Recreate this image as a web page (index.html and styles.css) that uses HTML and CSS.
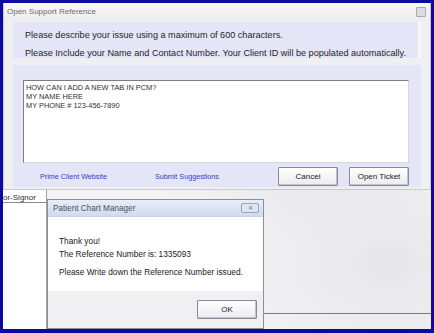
FILE: index.html
```html
<!DOCTYPE html>
<html lang="en">
  <head>
    <meta charset="UTF-8" />
    <title>Open Support Reference</title>
    <link rel="stylesheet" href="styles.css">
  </head>
  <body>
    <div class="screen">
      <div class="win">
        <div class="win__title">
          <span>Open Support Reference</span>
          <span class="win__close"></span>
        </div>
        <div class="panel panel--info">
          <p>Please describe your issue using a maximum of 600 characters.</p>
          <p>Please Include your Name and Contact Number. Your Client ID will be populated automatically.</p>
        </div>
        <div class="panel panel--form">
          <div class="memo">HOW CAN I ADD A NEW TAB IN PCM?<br>MY NAME HERE<br>MY PHONE # 123-456-7890</div>
          <div class="actions">
            <a class="link" href="#">Prime Client Website</a>
            <a class="link" href="#">Submit Suggestions</a>
            <button class="btn btn--cancel">Cancel</button>
            <button class="btn">Open Ticket</button>
          </div>
        </div>
      </div>

      <div class="desk">
        <div class="desk__left">
          <div class="desk__tab">or-Signor</div>
        </div>
        <div class="desk__rest"></div>
      </div>

      <div class="msg">
        <div class="msg__title">
          <span>Patient Chart Manager</span>
          <span class="msg__close">&#x2715;</span>
        </div>
        <div class="msg__body">
          <p>Thank you!<br>The Reference Number is: 1335093</p>
          <p>Please Write down the Reference Number issued.</p>
        </div>
        <div class="msg__foot">
          <button class="btn btn--ok">OK</button>
        </div>
      </div>
    </div>
  </body>
</html>
```

FILE: styles.css
```css
* {
  box-sizing: border-box;
}

body {
  margin: 0;
  padding: 3px 3px 4px 3px;
  width: 434px;
  height: 333px;
  background: #0b0ba4;
  font-family: "Liberation Sans", Arial, sans-serif;
  overflow: hidden;
}

p {
  margin: 0;
}

.screen {
  position: relative;
  width: 428px;
  height: 326px;
  background:
    radial-gradient(ellipse at 70% 40%, rgba(220, 220, 226, 0.6), transparent 40%),
    radial-gradient(ellipse at 90% 80%, rgba(226, 226, 230, 0.7), transparent 35%),
    #f3f3f5;
  overflow: hidden;
}

/* main window */
.win {
  height: 187px;
  background: #f0f0f3;
  border: 1px solid #c9c9d2;
  border-top: none;
  display: flex;
  flex-direction: column;
}

.win__title {
  height: 18px;
  display: flex;
  align-items: center;
  justify-content: space-between;
  padding: 0 4px 2px 3px;
  font-size: 8px;
  color: #6a6a6a;
  background: linear-gradient(#f8f8fa, #ededf0);
}

.win__close {
  width: 10px;
  height: 10px;
  border: 1px solid #a8a8b0;
  background: #dcdce2;
  border-radius: 1px;
  margin-top: 2px;
}

.panel {
  margin: 0 9px 0 9px;
  background: #e4e6f8;
}

.panel--info {
  margin-top: 1px;
  height: 36px;
  padding: 4px 0 0 12px;
  font-size: 9.1px;
  line-height: 18px;
  color: #1e1e1e;
  border-right: 3px solid #f6f6fc;
}

.panel--form {
  margin-top: 7px;
  flex: 1;
  padding: 15px 12px 0 10px;
  margin-bottom: 2px;
}

.memo {
  height: 83px;
  background: #fff;
  border: 1px solid #7d7d86;
  border-right-color: #d6d6de;
  border-bottom-color: #d6d6de;
  padding: 2px 2px;
  font-size: 7.4px;
  line-height: 9px;
  color: #303030;
}

.actions {
  display: flex;
  align-items: center;
  margin-top: 4px;
  padding-left: 17px;
}

.link {
  font-size: 7.2px;
  color: #2c3fc0;
  text-decoration: none;
}

.link + .link {
  margin-left: 48px;
}

.btn {
  font-family: inherit;
  font-size: 8px;
  color: #202020;
  height: 19px;
  width: 60px;
  padding: 0;
  border: 1px solid #8a8a94;
  border-radius: 1px;
  background: linear-gradient(#ffffff, #ececf0);
  box-shadow: inset -1px -1px 0 #c4c4cc;
}

.btn--cancel {
  margin-left: auto;
  margin-right: 11px;
}

/* background under the windows */
.desk {
  display: flex;
  height: 139px;
}

.desk__left {
  width: 44px;
  background: #fff;
  border-right: 1px solid #a0a0a0;
}

.desk__tab {
  font-size: 8px;
  color: #303030;
  padding: 3px 0 0 0;
  height: 13px;
  line-height: 9px;
  border-bottom: 1px solid #8a8a8a;
}

.desk__rest {
  flex: 1;
  border-bottom: 1px solid #7a7a80;
  height: 124px;
}

/* message box over the desktop */
.msg {
  position: absolute;
  left: 44px;
  top: 196px;
  width: 217px;
  height: 130px;
  border: 1px solid #8e8e96;
  background: #fff;
  display: flex;
  flex-direction: column;
}

.msg__title {
  height: 17px;
  display: flex;
  align-items: center;
  justify-content: space-between;
  padding: 0 4px 0 5px;
  font-size: 8.2px;
  color: #505060;
  background: linear-gradient(#e6eef8, #cfdcee);
  border-bottom: 1px solid #c8d2e0;
}

.msg__close {
  width: 18px;
  height: 10px;
  font-size: 6px;
  line-height: 9px;
  text-align: center;
  color: #6a7080;
  border: 1px solid #9aa4b4;
  border-radius: 2px;
  background: #dde6f2;
}

.msg__body {
  flex: 1;
  padding: 18px 0 0 11px;
  font-size: 8.3px;
  line-height: 13px;
  color: #202020;
}

.msg__body p + p {
  margin-top: 5px;
}

.msg__foot {
  height: 37px;
  background: #f0f0f2;
  display: flex;
  justify-content: flex-end;
  align-items: center;
  padding-right: 6px;
}

.btn--ok {
  width: 60px;
  height: 19px;
}
```
